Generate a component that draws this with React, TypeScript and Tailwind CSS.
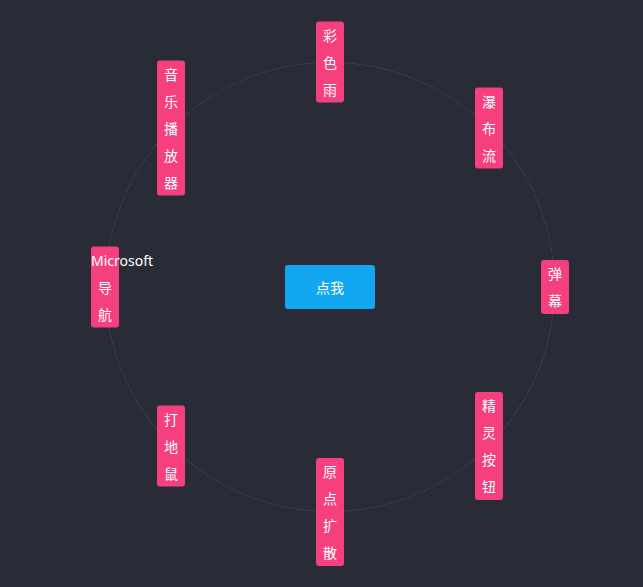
import { memo } from 'react';

const CX = 330;
const CY = 287;
const R = 225;

const items = ['彩色雨', '瀑布流', '弹幕', '精灵按钮', '原点扩散', '打地鼠', 'Microsoft导航', '音乐播放器'];

const splitLabel = (label: string) => {
  // keep latin words together, split CJK chars one per line
  return label.match(/[A-Za-z]+|./g) ?? [];
};

const Tag = memo(({ label, index }: { label: string; index: number }) => {
  const angle = (index * Math.PI) / 4;
  const x = CX + R * Math.sin(angle);
  const y = CY - R * Math.cos(angle);
  return (
    <div
      className="absolute -translate-x-1/2 -translate-y-1/2 w-[28px] rounded-[3px] bg-[#f53f7e] text-white text-[14px] leading-[27px] text-center whitespace-nowrap cursor-pointer"
      style={{ left: x, top: y }}
    >
      {splitLabel(label).map((ch, i) => (
        <div key={i}>{ch}</div>
      ))}
    </div>
  );
});

export default function App() {
  return (
    <div className="relative w-full h-[587px] overflow-hidden bg-[#292b37] font-['Noto_Sans','Noto_Sans_CJK_SC',sans-serif]">
      <div className="absolute left-[105px] top-[62px] w-[450px] h-[450px] rounded-full border border-dotted border-[#4f5260]" />
      <button className="absolute left-[285px] top-[265px] w-[90px] h-[44px] rounded-[3px] bg-[#13a7f1] text-white text-[14px]">
        点我
      </button>
      {items.map((label, i) => (
        <Tag key={label} label={label} index={i} />
      ))}
    </div>
  );
}
